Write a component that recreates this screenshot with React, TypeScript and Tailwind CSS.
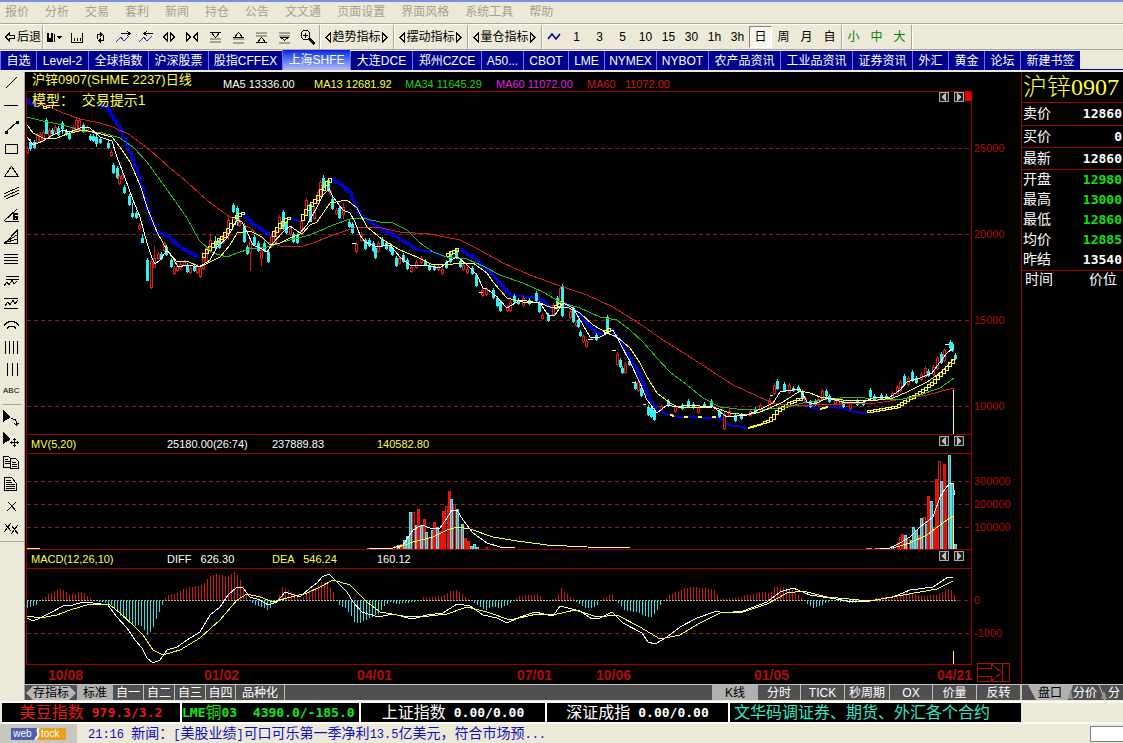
import React from 'react';
import clsx from 'clsx';

type Point = [number, number];

const toPoints = (s: string): Point[] =>
  s.trim().split(/\s+/).map((p) => p.split(',').map(Number) as Point);

const valueAt = (pts: Point[], x: number) => {
  for (let i = 1; i < pts.length; i++) {
    const [x0, y0] = pts[i - 1];
    const [x1, y1] = pts[i];
    if (x <= x1) return y0 + ((y1 - y0) * (x - x0)) / (x1 - x0);
  }
  return pts[pts.length - 1][1];
};

const MENUS = ['报价', '分析', '交易', '套利', '新闻', '持仓', '公告', '文文通', '页面设置', '界面风格', '系统工具', '帮助'];

const TABS: { label: string; width: string }[] = [
  { label: '自选', width: 'w-[36px]' },
  { label: 'Level-2', width: 'w-[52px]' },
  { label: '全球指数', width: 'w-[60px]' },
  { label: '沪深股票', width: 'w-[60px]' },
  { label: '股指CFFEX', width: 'w-[74px]' },
  { label: '上海SHFE', width: 'w-[68px]' },
  { label: '大连DCE', width: 'w-[62px]' },
  { label: '郑州CZCE', width: 'w-[69px]' },
  { label: 'A50...', width: 'w-[42px]' },
  { label: 'CBOT', width: 'w-[45px]' },
  { label: 'LME', width: 'w-[36px]' },
  { label: 'NYMEX', width: 'w-[52px]' },
  { label: 'NYBOT', width: 'w-[52px]' },
  { label: '农产品资讯', width: 'w-[72px]' },
  { label: '工业品资讯', width: 'w-[72px]' },
  { label: '证券资讯', width: 'w-[60px]' },
  { label: '外汇', width: 'w-[36px]' },
  { label: '黄金', width: 'w-[36px]' },
  { label: '论坛', width: 'w-[36px]' },
  { label: '新建书签', width: 'w-[60px]' },
];

// price pane
const MA5 = '27,137 33,145 43,141 53,135 63,130 70,132 83,127 90,128 100,137 112,141 117,157 125,178 133,200 140,217 147,243 152,258 155,264 160,260 167,250 173,258 178,267 187,265 199,267 210,260 217,247 227,238 237,220 242,222 247,232 253,245 260,248 267,252 273,243 283,232 290,226 300,233 307,225 317,207 323,195 329,189 333,197 343,210 350,213 355,222 360,235 365,242 377,247 390,245 400,257 410,265 423,265 440,268 450,260 458,257 467,265 477,275 483,288 487,289 497,297 507,308 520,300 540,303 548,315 555,315 563,303 573,308 583,325 590,337 600,337 613,330 620,343 630,362 640,383 647,400 657,413 667,405 677,407 687,405 713,407 727,417 747,415 763,408 773,403 780,392 793,390 800,389 807,402 815,404 827,398 843,402 863,402 873,398 890,397 900,390 907,382 920,378 932,373 940,362 947,353 953,348';
const MA13 = '27,125 33,133 43,138 57,138 67,134 83,130 97,133 112,137 120,147 130,162 140,185 148,210 157,232 167,250 177,262 187,261 200,267 220,257 230,245 237,233 250,231 262,237 270,245 280,243 290,238 303,233 310,225 317,222 330,203 347,200 357,208 367,227 383,240 400,250 417,257 433,265 453,264 473,263 487,273 493,282 507,298 523,302 540,303 552,308 567,307 580,313 593,325 607,333 617,337 630,348 640,363 647,377 657,393 670,403 680,408 713,407 730,413 747,415 760,412 770,408 783,402 800,391 810,393 820,397 843,400 870,401 893,398 907,392 927,382 940,373 953,360';
const MA34 = '27,117 43,121 63,125 83,131 103,133 120,138 133,147 147,162 160,180 173,198 187,218 199,240 213,253 227,257 237,253 250,249 267,247 290,240 310,235 333,225 353,218 367,219 380,222 393,223 407,230 420,243 433,252 447,257 467,259 483,266 500,275 523,283 543,292 560,302 580,308 600,317 617,320 630,330 643,342 657,358 670,372 687,385 703,398 720,407 737,409 760,410 787,407 803,403 827,399 853,397 877,399 903,399 920,395 940,388 954,378';
const MA60 = '33,98 50,107 63,113 80,119 100,123 113,127 130,135 150,150 170,168 187,182 200,194 213,205 230,217 250,228 267,242 280,246 300,247 313,243 333,235 357,227 377,227 400,232 430,234 460,240 480,250 503,263 530,275 560,286 587,295 613,307 637,322 663,340 687,355 710,370 733,385 757,396 773,403 793,406 813,405 843,404 877,403 903,399 927,395 954,388';

const BLUE = '#0000e0';
const YELLOW = '#ffff30';

const BANDS: { color: string; points: string }[] = [
  { color: BLUE, points: '27,99 30,103 38,106' },
  { color: YELLOW, points: '43,107 51,106' },
  { color: BLUE, points: '97,104 107,107 113,117 120,128 128,147 137,170 143,190 150,217 158,233 167,235 180,247 199,257' },
  { color: YELLOW, points: '202,257 213,245 223,237 230,228 235,218 242,213' },
  { color: BLUE, points: '243,214 253,224 270,235' },
  { color: YELLOW, points: '272,236 280,225 288,218' },
  { color: YELLOW, points: '301,220 308,208 318,198 323,188 331,179' },
  { color: BLUE, points: '332,179 340,183 350,192 355,205 363,217 380,228 393,235 407,243 418,250' },
  { color: YELLOW, points: '446,255 458,249' },
  { color: BLUE, points: '460,249 473,257 483,266 490,272 500,283 510,295' },
  { color: BLUE, points: '537,297 552,308' },
  { color: YELLOW, points: '554,308 562,302' },
  { color: BLUE, points: '564,303 577,312 587,323 597,333 604,334' },
  { color: YELLOW, points: '604,333 610,329' },
  { color: BLUE, points: '612,330 620,340 628,355 637,370 643,383 650,400 655,408' },
  { color: YELLOW, points: '763,423 770,421 777,412 790,403 800,399' },
  { color: YELLOW, points: '867,412 883,409 897,407 907,400 920,393 933,383 943,372 954,360' },
];

const FLAT_BANDS: { color: string; points: string; dash?: string }[] = [
  { color: BLUE, points: '289,218 300,221' },
  { color: BLUE, points: '418,250 433,252 445,257' },
  { color: BLUE, points: '510,296 537,297' },
  { color: BLUE, points: '655,410 663,413 680,417 720,418 725,424 747,428' },
  { color: YELLOW, points: '670,415 680,417 720,417', dash: '4 10' },
  { color: YELLOW, points: '748,428 763,424' },
  { color: BLUE, points: '800,399 810,407 820,410' },
  { color: YELLOW, points: '820,409 828,407' },
  { color: BLUE, points: '829,407 843,408 853,412 866,413' },
];

// colour, x, body top, body bottom, then optional high and low
const CANDLES = `
r27,148,152 c30,142,148,139,151 c34,142,147 r37,135,142 r40,134,141 r43,132,140 c46,120,133,118,134 r49,130,135 c52,130,133 r55,127,131 c58,128,134
c62,123,128,121,134 c66,131,134 c69,134,138 r73,127,131 r76,120,130 r79,120,130 c83,125,131 r87,127,130 c90,136,139 c93,136,140 c96,137,143,133,147 c100,139,142 c108,143,147,139,149
r111,152,155 c113,165,172 c117,168,177 r119,176,183 r122,175,178 c124,187,192 c129,196,204 c132,213,216,203,218 c136,213,217 r139,225,228 c142,238,242,234,242
c147,260,280,258,281 r151,261,287 r154,258,267,246,268 r158,254,258 c161,254,258 r164,243,250 c166,247,254 c171,260,266 r174,268,273 r177,266,270 r180,264,268 r184,262,265 c187,265,271
r190,268,272 c194,267,270 r197,266,272 r200,268,276 r203,258,268 r206,248,262 r210,240,250,234,253 c215,242,247,236,249 c219,240,247 r223,235,242 r228,220,235,217,240 c233,205,211
c237,208,220,206,226 r239,220,225 c244,225,241 c247,247,253 r250,241,252,240,271 c254,237,244 c258,243,250 r261,250,258,247,266 c264,243,250 c268,252,261 r271,236,246 r275,230,242
r279,217,230 c283,212,228 c286,223,232 r290,228,234 c293,234,241 c297,235,242 r301,221,233 r306,200,214 c310,204,221,202,222 r314,208,218 r318,192,203 r320,182,195
c323,178,187,175,190 c328,180,190 r330,191,194 c332,199,208 r336,210,213 c339,208,217 r343,207,214,203,219 c349,222,226 c352,224,232 r356,244,251 r361,234,240 c365,240,248
c369,240,245 c373,243,250 c375,248,257 r378,243,251 c382,239,245 c386,243,248 c390,245,250 c392,249,254 c396,258,265 r399,258,263 c403,255,261 c407,260,268 r411,267,271
r416,262,267 r421,258,262 c425,261,264 c429,265,269 c434,266,269 r438,266,269 r442,269,273 c446,262,267 c450,254,261 c456,250,257 c460,261,266 r463,265,269 r467,269,272 c472,268,273
c476,275,285 r482,290,295 r486,289,294 c493,290,297 c497,298,305 c500,302,310 r507,307,310 r510,302,310 c514,296,301 c518,300,303 r523,298,305 c529,300,303 c536,293,300
c539,303,311 r542,315,318 c548,315,320 r553,305,314 c557,298,304 r560,288,302 c562,286,315 r570,311,317 c573,308,321 r576,322,325 c578,320,326 c580,332,335 r583,336,341
r586,341,346 c596,335,339 c607,317,331 r617,354,364 c620,360,366 c622,368,372 r625,364,372 c629,361,364 c635,383,388 r638,382,390 c641,388,395 c648,407,414 c651,408,416
c654,410,419 r661,406,409 c668,401,405 r675,407,411 c682,405,408 c688,401,406 c693,404,407 r698,407,412 c704,404,406 c711,401,405 c719,411,416 r724,415,428 r729,411,415 c735,415,420
c741,415,418 r750,411,415 c755,409,412 r760,405,409 r769,400,407 r774,385,393 c777,381,388 c784,384,390 r789,385,392 c793,388,390 c798,387,390 c802,392,398 r805,398,401
c810,402,406 c815,401,404 r818,399,404 r822,391,398 c826,391,395 c829,396,401 r835,400,403 r840,399,403 c843,402,406 r850,403,408 c857,401,404 c863,402,404 c870,390,396
c874,396,399 c881,395,398 c886,396,398 r892,393,397 r897,387,393 r900,382,390 c904,376,384 r908,378,384 c912,372,380 c916,378,382 r921,374,379 r925,368,376 c928,371,375
r933,367,374 r937,358,368 c941,354,362 r944,350,360 c950,342,347 c952,344,350 c955,355,358`;

const VOLUME = `
r395,3 c398,4 r401,5 c404,9 c407,13 c410,37 r413,37 c416,24 r418,40 c421,23 r424,30 c426,17 r429,12 c432,19 r434,27 c437,22 r440,18 r443,38 r446,43 r449,58 c451,50 r454,45 c457,40
r460,20 c462,25 r465,11 r468,8 c471,3 c474,5 c477,2 r486,2 c892,3 r898,7 r900,12 r902,15 c905,14 r908,10 c911,9 c913,22 c916,19 r919,14 c921,31 r924,32 c926,25 r928,53 c931,48
r934,22 r936,70 r939,88 c941,68 r944,85 r947,60 c949,94 c952,66 c955,5`;

const HISTOGRAM = '27,-8 35,-6 40,0 43,2 50,7 60,11 62,11 68,6 75,6 80,9 85,6 90,2 93,0 100,-2 110,-4 120,-16 125,-19 130,-24 135,-26 140,-24 147,-35 152,-30 155,-22 158,-14 162,-5 164,0 167,5 175,6 185,12 195,14 203,15 208,23 215,26 222,25 226,22 232,27 235,28 240,20 243,14 246,5 249,0 253,-4 260,-7 268,-10 273,-4 276,-1 279,5 282,13 288,10 295,6 300,1 304,3 308,8 314,12 320,17 322,18 328,15 333,8 336,0 338,-5 345,-8 350,-14 354,-22 358,-24 364,-21 370,-18 378,-14 384,-6 390,-2 395,-4 405,-3 415,-2 420,0 423,3 435,3 445,5 450,9 457,10 462,6 466,2 472,-1 478,-6 485,-10 492,-7 500,-8 508,-5 514,0 518,4 530,5 538,6 543,0 550,0 555,2 558,6 561,12 564,8 569,4 573,1 576,-2 583,-7 590,-9 597,-5 600,-1 603,2 612,6 614,0 618,-3 624,-10 635,-12 643,-15 650,-18 655,-13 660,-5 663,0 668,4 675,8 685,12 692,13 705,12 715,10 720,1 735,2 745,4 753,6 760,8 770,7 775,14 783,13 790,11 797,7 801,2 804,0 808,-5 813,-8 820,-6 826,-2 835,-1 850,-3 865,-2 873,1 885,3 898,4 904,8 915,6 925,4 935,5 943,8 948,11 952,9 955,3 957,0';
const DIFF = '27,618 33,621 40,618 50,613 63,606 73,605 83,602 93,603 108,605 117,617 127,628 135,640 142,648 147,658 153,663 160,660 167,650 177,647 187,640 200,632 210,615 220,607 228,595 237,587 243,588 250,597 260,600 268,605 277,602 285,592 300,597 310,588 317,583 322,577 329,574 337,582 347,592 353,602 362,612 378,617 393,614 412,619 427,615 443,613 457,604 470,606 483,615 497,618 507,623 520,617 535,612 553,616 560,606 580,611 592,619 600,618 612,612 623,623 642,633 648,642 655,644 667,637 680,627 697,618 717,611 723,613 743,611 767,602 780,592 793,588 810,595 830,598 853,602 870,601 893,597 910,590 933,587 948,577 953,577';
const DEA = '27,616 40,618 57,615 70,610 90,604 110,605 120,613 133,625 143,635 153,650 163,655 180,650 200,638 220,620 237,600 247,594 260,597 273,602 287,598 307,593 320,587 333,580 350,585 367,602 380,612 403,616 420,617 447,614 467,607 487,612 510,620 537,614 553,615 575,610 597,617 617,615 640,627 660,639 680,635 700,623 720,613 743,612 767,604 787,593 803,591 827,597 870,601 903,595 937,589 953,581';

const parseMarks = (s: string) =>
  s.trim().split(/\s+/).map((m) => ({ up: m[0] === 'r', v: m.slice(1).split(',').map(Number) }));

const Line = ({ points, color, width = 1, dash }: { points: string; color: string; width?: number; dash?: string }) => (
  <polyline points={points} fill="none" stroke={color} strokeWidth={width} strokeDasharray={dash} />
);

const GridLine = ({ y }: { y: number }) => (
  <line x1={27} x2={971} y1={y + 0.5} y2={y + 0.5} stroke="#842020" strokeDasharray="4 3" />
);

// stepped ribbon that follows a path in 3px boxes
const Ladder = ({ points, color }: { points: string; color: string }) => {
  const pts = toPoints(points);
  const boxes: React.ReactNode[] = [];
  for (let x = pts[0][0]; x < pts[pts.length - 1][0]; x += 3) {
    const a = valueAt(pts, x);
    const b = valueAt(pts, x + 3);
    boxes.push(
      <rect
        key={x}
        x={x + 0.5}
        y={Math.round(Math.min(a, b)) - 0.5}
        width={color === BLUE ? 2 : 3}
        height={Math.max(2, Math.round(Math.abs(a - b)) + 1)}
        fill={color === BLUE ? '#0000b0' : 'none'}
        stroke={color}
      />
    );
  }
  return <g>{boxes}</g>;
};

const PricePlot = () => (
  <svg viewBox="27 92 944 342" preserveAspectRatio="none" shapeRendering="crispEdges" className="block h-[342px] w-full">
    {[148, 234, 320, 406].map((y) => <GridLine key={y} y={y} />)}
    {FLAT_BANDS.map((b, i) => <Line key={i} {...b} width={2} />)}
    {BANDS.filter((b) => b.color === BLUE).map((b, i) => <Ladder key={i} {...b} />)}
    {parseMarks(CANDLES).map(({ up, v: [x, top, bottom, high = top - 2, low = bottom + 2] }) => (
      <g key={x} stroke={up ? '#e01818' : '#30f0f0'} fill={up ? '#000' : '#30f0f0'}>
        <line x1={x + 0.5} x2={x + 0.5} y1={high} y2={low} />
        <rect x={x - 0.5} y={top + 0.5} width={2} height={bottom - top} />
      </g>
    ))}
    {BANDS.filter((b) => b.color !== BLUE).map((b, i) => <Ladder key={i} {...b} />)}
    <Line points={MA60} color="#d02020" />
    <Line points={MA34} color="#20c020" />
    <Line points={MA13} color="#ffff40" />
    <Line points={MA5} color="#fff" />
    <path d="M612 350.5h4 M632 382.5h4 M643 404.5h3 M770 395.5h3 M352 243.5h4 M588 339.5h5 M479 292.5h4 M945 344.5h4" stroke="#eee" />
    <line x1={953.5} x2={953.5} y1={390} y2={434} stroke="#ffff40" />
  </svg>
);

const VolumePlot = () => (
  <svg viewBox="27 454 944 95" preserveAspectRatio="none" shapeRendering="crispEdges" className="block h-[95px] w-full">
    {[481, 504, 527].map((y) => <GridLine key={y} y={y} />)}
    {parseMarks(VOLUME).map(({ up, v: [x, h] }, i) => (
      <rect
        key={x}
        x={x - 0.5}
        y={549.5 - h}
        width={2}
        height={h}
        stroke={up ? '#e01818' : '#50e8e8'}
        fill={up && i % 3 !== 0 ? '#f00' : up ? '#000' : '#889'}
      />
    ))}
    <path d="M27 548.5h13 M953.5 516v33" stroke="#ffff40" />
    <path d="M367 548.5h26 M866 548.5h27" stroke="#c88" strokeDasharray="6 3" />
    <Line color="#fff" points="370,548 393,548 403,545 413,530 422,525 430,528 440,528 447,518 452,510 457,510 463,520 473,533 487,543 500,547 515,548" />
    <Line color="#ffff40" points="397,548 413,542 433,537 447,530 457,527 470,529 493,537 517,541 547,545 587,547 630,548" />
    <Line color="#fff" points="880,548 890,548 900,543 910,537 920,527 933,517 940,497 945,489 950,483 953,484 955,495" />
    <Line color="#ffff40" points="893,548 910,543 927,535 940,525 947,520 953,516" />
  </svg>
);

const MacdPlot = () => {
  const pts = toPoints(HISTOGRAM);
  const bars: React.ReactNode[] = [];
  for (let x = 27; x < 957; x += 3) {
    const v = Math.round(valueAt(pts, x));
    if (v === 0) continue;
    bars.push(<line key={x} x1={x + 0.5} x2={x + 0.5} y1={600} y2={600 - v} stroke={v > 0 ? '#d01818' : '#30e0e0'} />);
  }
  return (
    <svg viewBox="27 569 944 95" preserveAspectRatio="none" shapeRendering="crispEdges" className="block h-[95px] w-full">
      <GridLine y={633} />
      <line x1={27} x2={957} y1={600.5} y2={600.5} stroke="#b8b8a8" strokeDasharray="2 1" />
      <line x1={957} x2={971} y1={600.5} y2={600.5} stroke="#842020" strokeDasharray="4 3" />
      {bars}
      <Line points={DIFF} color="#fff" />
      <Line points={DEA} color="#ffff40" />
      <line x1={953.5} x2={953.5} y1={651} y2={664} stroke="#ffff40" />
    </svg>
  );
};

const PagerButtons = () => (
  <div className="flex gap-[5px]">
    <button aria-label="Previous" className="block">
      <svg width="10" height="10" shapeRendering="crispEdges" className="block">
        <rect x="0.5" y="0.5" width="9" height="9" fill="#222" stroke="#aaa" />
        <path d="M7 1v8L2 5z" fill="#bbb" />
      </svg>
    </button>
    <button aria-label="Next" className="block">
      <svg width="10" height="10" shapeRendering="crispEdges" className="block">
        <rect x="0.5" y="0.5" width="9" height="9" fill="#222" stroke="#aaa" />
        <path d="M3 1v8L8 5z" fill="#bbb" />
      </svg>
    </button>
  </div>
);

const PaneHeader = ({ cells }: { cells: { text: string; cls: string }[] }) => (
  <div className="flex h-[19px] items-center border-b border-[#a00000] pr-[7px] pl-1 text-[11px] leading-[18px]">
    {cells.map((c) => (
      <span key={c.text} className={clsx('whitespace-pre', c.cls)}>{c.text}</span>
    ))}
    <div className="ml-auto self-start pt-px"><PagerButtons /></div>
  </div>
);

const TOOL_ICONS: { name: string; d: string; fill?: string }[] = [
  { name: 'Trend line', d: 'M3 13L14 2' },
  { name: 'Horizontal line', d: 'M1 8.5h14' },
  { name: 'Segment', d: 'M3 13L14 3', fill: 'M2 12h3v3H2z M13 2h3v3h-3z' },
  { name: 'Rectangle', d: 'M2.5 3.5h12v9h-12z' },
  { name: 'Triangle', d: 'M1.500 13.500h14L8.500 3.500z' },
  { name: 'Parallel lines', d: 'M1 9L16 2 M1 12L16 5 M3 14L16 8' },
  { name: 'Gann angle', d: 'M1.500 14.500h14 M1 14L14 2', fill: 'M10 6h5v2h-3v4h1v-1h-1V9h3v4h-5z' },
  { name: 'Speed fan', d: 'M1.500 14.500h13V1z M1 14L14 6 M1 14L14 10' },
  { name: 'Golden section', d: 'M1 3.500h14 M1 6.500h14 M1 9.500h14 M1 12.500h14' },
  { name: 'Percent lines', d: 'M3 3.500h13 M3 6.500h13 M1 13l3-4 2 3 3-5 2 4 3-3' },
  { name: 'Wave band', d: 'M1 3.500h14 M1 13.500h14 M2 11l3-4 2 3 3-5 2 4 3-4' },
  { name: 'Arcs', d: 'M1 9c3-6 12-6 15 0 M4 12c2-4 7-4 9 0' },
  { name: 'Time lines', d: 'M2.500 2v13 M6.500 2v13 M10.500 2v13 M14.500 2v13' },
  { name: 'Cycle lines', d: 'M4.500 2v13 M9.500 2v13 M14.500 2v13' },
];

const EDIT_ICONS: { name: string; d: string; fill?: string }[] = [
  { name: 'Select', d: 'M8 8.500h2 M10 9.500h2l1.500 2v4 M11 13l2.500 2.500 2-2.500', fill: 'M0 0v12l8-5z' },
  { name: 'Move', d: 'M11.500 6v9 M7 10.500h9 M10 7.500h3 M10 13.500h3 M8.500 9v3 M14.500 9v3', fill: 'M0 0v12l8-5z' },
  { name: 'Copy', d: 'M0.500 2.500h5l2 2v9h-7z M2 5.500h3 M2 7.500h5 M2 9.500h5 M7.500 4.500h5l3 3v7h-8z M9 8.500h4 M9 10.500h5 M9 12.500h5' },
  { name: 'Properties', d: 'M1.500 1.500h7l5 6v7h-12z M3 4.500h5 M3 6.500h6 M3 8.500h9 M3 10.500h9 M3 12.500h9' },
  { name: 'Delete', d: 'M4 13l9-9 M5 4l3 3 5 6' },
  { name: 'Delete all', d: 'M1 12l7-9 M2 4l6 7 M8 14l7-9 M9 6l6 8' },
];

const ToolButton = ({ name, d, fill }: { name: string; d: string; fill?: string }) => (
  <button aria-label={name} className="flex h-[22px] items-center pl-[3px]">
    <svg width="17" height="17" shapeRendering="crispEdges" fill="none" stroke="#000">
      <path d={d} />
      {fill && <path d={fill} fill="#000" stroke="none" />}
    </svg>
  </button>
);

const BAR_ICONS: { name: string; d: string; fill?: string; bars?: string; extra?: string }[] = [
  { name: 'Save layout', d: '', fill: 'M1 4h2v9H1z M3 9h2v4H3z M5 4h2v9H5z M8 5h1v8H8z M11 7h5l-2.500 3z' },
  { name: 'Ruler', d: 'M2.500 4v9h11V4 M5.500 9v3 M8.500 9v3 M11.500 9v3' },
  { name: 'Refresh', d: 'M5.500 10V5.500H9 M11.500 6v5.500H8', fill: 'M8 2v7l3-3.500z M9 8v7l-3-3.500z' },
  { name: 'Line forward', d: 'M6 4.500h9 M12 2l3 2.500-3 2.500', extra: 'M1 13l5-5 3 4 5-5' },
  { name: 'Line back', d: 'M6 4.500h9 M9 2L6 4.500 9 7', extra: 'M1 13l5-5 3 4 5-5' },
  { name: 'Widen', d: 'M6.500 4v8l-4-4z M9.500 4v8l4-4z' },
  { name: 'Narrow', d: 'M2.500 4v8l4-4z M13.500 4v8l-4-4z' },
  { name: 'Shrink top', d: 'M3 3.500h11 M5 4.500l3.500 4 3.500-4', bars: 'M3 9.500h11 M3 13h11' },
  { name: 'Grow top', d: 'M3 8.500h11 M5 7.500l3.500-4 3.500 4', bars: 'M3 10h11 M3 13.500h11' },
  { name: 'Grow bottom', d: 'M3 13.500h11 M5 12.500l3.500-4 3.500 4', bars: 'M3 3.500h11 M3 7h11' },
  { name: 'Shrink bottom', d: 'M5 8.500h7l-3.500 3z', bars: 'M3 3.500h11 M3 6.500h11 M3 13.500h11' },
  { name: 'Zoom in', d: 'M6.500 1.500c6 0 6 9 0 9s-6-9 0-9 M4 6.500h5 M6.500 4v5', fill: 'M9 10l2-1 5 5-2 2z' },
];

const Separator = () => <div className="h-6 w-px shrink-0 bg-[#aca899] shadow-[1px_0_0_#fff]" />;

const Periods = ({ items, active, cls }: { items: string[]; active?: string; cls?: string }) => (
  <>
    {items.map((t) => (
      <button
        key={t}
        className={clsx('h-[22px] w-[23px] shrink-0 border text-center', cls, t === active ? 'border-t-[#8a8778] border-r-white border-b-white border-l-[#8a8778] bg-[#f6f5ee]' : 'border-transparent')}
      >
        {t}
      </button>
    ))}
  </>
);

const Toolbar = () => (
  <div className="flex h-[25px] items-center overflow-hidden border-t border-white text-xs">
    <button className="flex w-[42px] shrink-0 items-center gap-px pl-1 text-left whitespace-nowrap">
      <svg width="12" height="12" fill="none" stroke="#000" shapeRendering="crispEdges" className="shrink-0">
        <path d="M1.500 6L5.500 2v2.500h5v3h-5V10z" />
      </svg>
      后退
    </button>
    <Separator />
    {BAR_ICONS.map((ic) => (
      <button key={ic.name} aria-label={ic.name} className="flex w-[23px] shrink-0 justify-center">
        <svg width="17" height="17" fill="none" stroke="#000" shapeRendering="crispEdges">
          {ic.bars && <path d={ic.bars} stroke="#a5a294" strokeWidth="2" />}
          {ic.extra && <path d={ic.extra} stroke="#3030b0" />}
          <path d={ic.d} />
          {ic.fill && <path d={ic.fill} fill="#000" stroke="none" />}
        </svg>
      </button>
    ))}
    {['趋势指标', '摆动指标', '量仓指标'].map((t) => (
      <React.Fragment key={t}>
        <Separator />
        <button className="flex w-[73px] shrink-0 items-center justify-center whitespace-nowrap">
          <svg width="7" height="11" fill="none" stroke="#000" shapeRendering="crispEdges"><path d="M5.500 1v9L1 5.500z" /></svg>
          {t}
          <svg width="7" height="11" fill="none" stroke="#000" shapeRendering="crispEdges"><path d="M1.500 1v9L6 5.500z" /></svg>
        </button>
      </React.Fragment>
    ))}
    <Separator />
    <button aria-label="Line chart" className="flex w-[23px] shrink-0 justify-center">
      <svg width="14" height="10" fill="none" stroke="#00008c" strokeWidth="1.500"><path d="M1 7l4-5 4 5 4-5" /></svg>
    </button>
    <Periods items={['1', '3', '5', '10', '15', '30', '1h', '3h', '日', '周', '月', '自']} active="日" />
    <Separator />
    <Periods items={['小', '中', '大']} cls="text-[#008000]" />
    <Separator />
  </div>
);

const HEADER_MA = [
  { text: 'MA5 13336.00', cls: 'text-white' },
  { text: 'MA13 12681.92', cls: 'text-[#ffff40]' },
  { text: 'MA34 11645.29', cls: 'text-[#20d020]' },
  { text: 'MA60 11072.00', cls: 'text-[#e020e0]' },
  { text: 'MA60   11072.00', cls: 'text-[#d01818]' },
];

const ChartArea = () => (
  <div className="flex min-w-0 flex-1 bg-black pl-px">
    <div className="min-w-0 flex-1">
      <div className="flex h-[19px] items-center overflow-hidden whitespace-pre">
        <span className="w-[197px] shrink-0 pb-1 pl-[6px] text-[13px] leading-4 text-[#ffff40]">沪锌0907(SHME 2237)日线</span>
        {HEADER_MA.map((m) => (
          <span key={m.text} className={clsx('w-[91px] shrink-0 pt-1 text-[11px] leading-[14px]', m.cls)}>{m.text}</span>
        ))}
      </div>
      <div className="border border-[#a00000]">
        <div className="relative border-b border-[#a00000]">
          <PricePlot />
          <span className="absolute top-0 left-[5px] text-sm leading-4 whitespace-pre text-[#ffff40]">模型：  交易提示1</span>
          <div className="absolute top-0 right-[7px]"><PagerButtons /></div>
          <div className="absolute top-0 right-0 h-[9px] w-[6px] bg-[#f00000]" />
        </div>
        <PaneHeader
          cells={[
            { text: 'MV(5,20)', cls: 'w-[136px] text-[#ffff40]' },
            { text: '25180.00(26:74)', cls: 'w-[105px] text-white' },
            { text: '237889.83', cls: 'w-[105px] text-white' },
            { text: '140582.80', cls: 'text-[#ffff40]' },
          ]}
        />
        <div className="border-b border-[#a00000]"><VolumePlot /></div>
        <PaneHeader
          cells={[
            { text: 'MACD(12,26,10)', cls: 'w-[136px] text-[#ffff40]' },
            { text: 'DIFF   626.30', cls: 'w-[105px] text-white' },
            { text: 'DEA   546.24', cls: 'w-[105px] text-[#ffff40]' },
            { text: '160.12', cls: 'text-white' },
          ]}
        />
        <MacdPlot />
      </div>
      <div className="grid h-[19px] grid-cols-[156fr_153fr_160fr_79fr_158fr_183fr_35fr] pl-[22px] text-sm leading-5 font-bold text-[#b00c0c]">
        {['10/08', '01/02', '04/01', '07/01', '10/06', '01/05', '04/21'].map((d) => <span key={d}>{d}</span>)}
      </div>
    </div>
    <div className="w-[49px] shrink-0 pt-[33px] pl-[2px] text-[11px] text-[#b00c0c]">
      {['25000', '20000', '15000', '10000'].map((t) => <div key={t} className="h-[86px] leading-[86px]">{t}</div>)}
      <div className="pt-[21px]">
        {['300000', '200000', '100000'].map((t) => <div key={t} className="h-[23px] leading-[23px]">{t}</div>)}
      </div>
      <div className="pt-[45px]">
        {['0', '-1000'].map((t) => <div key={t} className="h-[33px] leading-[33px]">{t}</div>)}
      </div>
      <button aria-label="Jump to latest" className="mt-[13px] ml-[3px] block">
        <svg width="34" height="20" fill="none" stroke="#b00c0c" shapeRendering="crispEdges">
          <path d="M0.500 0.500h32v18h-32z M0.500 5.500h14V1l10 8.500-10 8.500v-4.500h-14 M25.500 1v17" />
        </svg>
      </button>
    </div>
  </div>
);

const QUOTES = [
  { label: '卖价', value: '12860', cls: 'text-white', row: 'h-[22px] border-b' },
  { label: '买价', value: '0', cls: 'text-white', row: 'h-[22px] border-b' },
  { label: '最新', value: '12860', cls: 'text-white', row: 'h-[22px] border-b' },
  { label: '开盘', value: '12980', cls: 'text-[#10e010]', row: 'h-[20px]' },
  { label: '最高', value: '13000', cls: 'text-[#10e010]', row: 'h-[20px]' },
  { label: '最低', value: '12860', cls: 'text-[#10e010]', row: 'h-[20px]' },
  { label: '均价', value: '12885', cls: 'text-[#10e010]', row: 'h-[20px]' },
  { label: '昨结', value: '13540', cls: 'text-white', row: 'h-[21px] border-b' },
];

const QuotePanel = () => (
  <aside className="w-[102px] shrink-0 border-l border-[#a00000] bg-black text-sm text-white">
    <h1 className="h-[31px] border-b border-[#a00000] pl-px font-['Liberation_Serif','Noto_Sans_CJK_SC',serif] text-2xl leading-[31px] font-light whitespace-nowrap text-[#ffff40]">沪锌0907</h1>
    <table className="w-full border-collapse">
      <tbody>
        {QUOTES.map((q) => (
          <tr key={q.label} className={clsx('border-[#a00000]', q.row)}>
            <th className="p-0 pl-px text-left text-sm leading-[19px] font-normal">{q.label}</th>
            <td className={clsx("py-0 pr-px pl-0 text-right font-['DejaVu_Sans_Mono',monospace] text-[13px] leading-[19px] font-bold", q.cls)}>{q.value}</td>
          </tr>
        ))}
      </tbody>
    </table>
    <div className="flex justify-between pr-[6px] pl-[3px] leading-[17px]">
      <span>时间</span>
      <span>价位</span>
    </div>
  </aside>
);

const StripTab = ({ label, width, active }: { label: string; width: string; active?: boolean }) => (
  <button className={clsx('h-[15px] shrink-0 text-center whitespace-nowrap', width, active ? 'bg-[#b0b0b0] text-black' : 'border-r border-[#c0c0c0] text-white')}>{label}</button>
);

const BottomTabs = () => (
  <div className="flex h-4 overflow-hidden border-t border-[#c0c0c0] bg-[#505050] text-xs leading-[14px]">
    <button className="flex w-[52px] shrink-0 items-center bg-[#505050] text-black">
      <svg width="8" height="14" className="shrink-0"><path d="M8 0v14L1 7z" fill="#b8b8b8" /></svg>
      <span className="bg-[#b8b8b8] whitespace-nowrap">存指标</span>
      <svg width="8" height="14" className="shrink-0"><path d="M0 0v14L7 7z" fill="#b8b8b8" /></svg>
    </button>
    <StripTab label="标准" width="w-[36px]" active />
    <StripTab label="自一" width="w-[31px]" />
    <StripTab label="自二" width="w-[31px]" />
    <StripTab label="自三" width="w-[31px]" />
    <StripTab label="自四" width="w-[30px]" />
    <StripTab label="品种化" width="w-[49px]" />
    <div className="ml-auto flex">
      <StripTab label="K线" width="w-[46px]" active />
      <StripTab label="分时" width="w-[43px]" />
      <StripTab label="TICK" width="w-[44px]" />
      <StripTab label="秒周期" width="w-[45px]" />
      <StripTab label="OX" width="w-[43px]" />
      <StripTab label="价量" width="w-[44px]" />
      <StripTab label="反转" width="w-[44px]" />
    </div>
    <div className="flex w-[102px] shrink-0 overflow-hidden border-l border-[#c0c0c0] whitespace-nowrap">
      <svg width="14" height="15" className="shrink-0"><path d="M6 0h8v15z" fill="#b0b0b0" /></svg>
      <button className="w-[28px] shrink-0 bg-[#b0b0b0] text-black">盘口</button>
      <svg width="9" height="15" className="shrink-0"><path d="M0 0h9L4 15H0z" fill="#b0b0b0" /><path d="M4 13l3-8 2 10z" fill="#909090" /></svg>
      <button className="shrink-0 text-white">分价</button>
      <svg width="11" height="15" className="shrink-0"><path d="M2 0l6 15" stroke="#c0c0c0" /><path d="M4 14l3-8 3 8z" fill="#909090" /></svg>
      <button className="shrink-0 text-white">分</button>
    </div>
  </div>
);

const INDEXES = [
  { name: '美豆指数', value: '979.3/3.2', cls: 'w-[180px] justify-center text-[#e01c1c]' },
  { name: '上证指数', value: '0.00/0.00', cls: 'w-[186px] justify-center text-white' },
  { name: '深证成指', value: '0.00/0.00', cls: 'w-[183px] justify-center text-white' },
];

const mono = "font-['DejaVu_Sans_Mono',monospace] text-[13px] font-bold whitespace-pre";

const IndexCell = ({ name, value, cls }: { name: string; value: string; cls: string }) => (
  <div className={clsx('flex shrink-0 items-center gap-2 border-r-2 border-white bg-black', cls)}>
    {name}
    <span className={mono}>{value}</span>
  </div>
);

const App: React.FC = () => {
  return (
    <div className="flex min-h-screen flex-col overflow-hidden bg-[#ece9d8] font-['Liberation_Sans','Noto_Sans_CJK_SC',sans-serif] text-black">
      <div className="h-[2px] bg-[#7b90e0]" />
      <nav className="flex h-[22px] items-center gap-4 border-b border-[#aca899] pb-[2px] pl-[5px] text-xs whitespace-nowrap text-[#a5a294]">
        {MENUS.map((m) => <button key={m}>{m}</button>)}
      </nav>
      <Toolbar />
      <div className="flex h-[23px] items-end overflow-hidden border-t border-[#aca899] pb-[2px] text-xs whitespace-nowrap text-white">
        {TABS.map((t) => (
          <button
            key={t.label}
            className={clsx('shrink-0 border-l border-[#7070ff] text-center', t.width, t.label === '上海SHFE' ? 'h-[20px] bg-linear-to-b from-[#1010e0] to-[#b8b8f8]' : 'h-[19px] bg-[#00008c]')}
          >
            {t.label}
          </button>
        ))}
        <div className="h-px flex-1 bg-[#00008c]" />
      </div>

      <div className="flex">
        <div className="flex w-[25px] shrink-0 flex-col border-r border-[#aca899]">
          {TOOL_ICONS.map((t) => <ToolButton key={t.name} {...t} />)}
          <button className="h-[22px] pl-[3px] text-left text-[8px] leading-[22px]">ABC</button>
          <div className="mx-[2px] my-[2px] h-px bg-[#aca899]" />
          {EDIT_ICONS.map((t) => <ToolButton key={t.name} {...t} />)}
          <div className="mt-[2px] h-px bg-[#aca899]" />
        </div>
        <div className="min-w-0 flex-1">
          <div className="flex">
            <ChartArea />
            <QuotePanel />
          </div>
          <BottomTabs />
        </div>
      </div>

      <div className="mt-px flex h-[23px] overflow-hidden border-y-2 border-[#fbfaf5] pl-[2px] text-base leading-[19px] whitespace-nowrap">
        <IndexCell {...INDEXES[0]} />
        <div className="flex w-[179px] shrink-0 items-center overflow-hidden border-r-2 border-white bg-black text-[#10e810]">
          <span className={mono}>LME</span>铜<span className={mono}>03  4390.0/-185.0</span>
        </div>
        <IndexCell {...INDEXES[1]} />
        <IndexCell {...INDEXES[2]} />
        <div className="w-[291px] shrink-0 bg-black pl-1 text-[#30e8c8]">文华码调证券、期货、外汇各个合约</div>
      </div>

      <footer className="flex h-[19px] items-center text-sm leading-[19px] whitespace-nowrap text-[#1010b8]">
        <div className="flex h-[19px] w-[77px] items-center bg-[#c8c6c0] pl-[11px]">
          <div className="flex h-[12px] w-[55px] text-[10px] leading-[12px] text-white">
            <span className="w-[23px] bg-[#4a62a8] text-center">web</span>
            <svg width="6" height="12" className="shrink-0 bg-[#4a62a8]"><path d="M3 12V0h3v12z" fill="#e8a020" /><path d="M5 0C1 3 6 6 4 8S2 11 1 12" fill="none" stroke="#fff" strokeWidth="2" /></svg>
            <span className="flex-1 bg-[#e8a020] pl-px">tock</span>
          </div>
        </div>
        <p className="pl-[11px]">
          <span className="font-['Liberation_Mono',monospace] text-xs">21:16 </span>新闻：
          <span className="font-['Liberation_Mono',monospace] text-xs">[</span>美股业绩
          <span className="font-['Liberation_Mono',monospace] text-xs">]</span>可口可乐第一季净利
          <span className="font-['Liberation_Mono',monospace] text-xs">13.5</span>亿美元，符合市场预
          <span className="font-['Liberation_Mono',monospace] text-xs">...</span>
        </p>
        <input aria-label="Code" className="ml-auto h-4 w-[33px] border border-r-0 border-[#808080] bg-white" />
      </footer>
    </div>
  );
};

export default App;
